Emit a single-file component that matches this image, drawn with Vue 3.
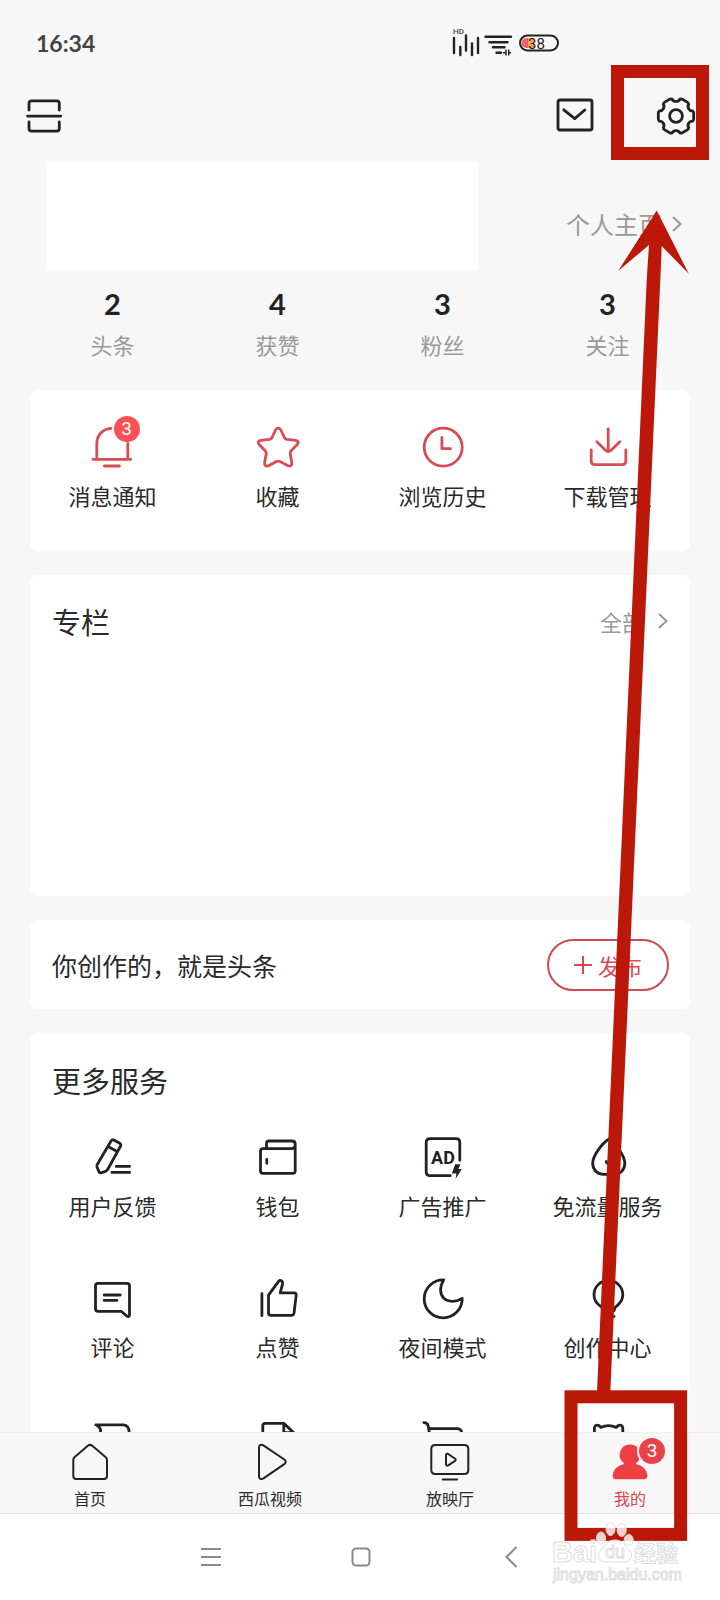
<script setup>
const stats = [
  { value: 2, label: '头条' },
  { value: 4, label: '获赞' },
  { value: 3, label: '粉丝' },
  { value: 3, label: '关注' },
]

const shortcuts = [
  {
    label: '消息通知',
    badge: 3,
    d: 'M22 5.4C13 6.2 7.8 12.4 7.8 21V36.3M38.8 20.3V36.3M4 36.3H41.8M15.4 43H30.4',
  },
  {
    label: '收藏',
    d: 'M21.5 7Q24.2 3.2 26.9 7L30.4 14.5Q31.2 16 33 16.3L41.7 17.3Q46 18.5 43 21.7L37 28Q35.9 29.3 36.2 31L37.8 39.5Q38 44.2 34 42.8L26 38.5Q24.2 37.7 22.4 38.5L14.5 42.8Q10.3 44.2 10.6 39.5L12.2 31Q12.5 29.3 11.4 28L5.4 21.7Q2.4 18.5 6.7 17.3L15.4 16.3Q17.2 16 18 14.5Z',
  },
  {
    label: '浏览历史',
    d: 'M5.2 24.2a19 19 0 1 0 38 0a19 19 0 1 0 -38 0M22.9 14.3V25.7H31.5',
  },
  {
    label: '下载管理',
    d: 'M24.2 6V28.5M12.8 18.7L21.5 27.3Q24.2 29.5 27 27.3L35.8 18.7M7.2 27V38Q7.2 41.7 11 41.7H38Q41.8 41.7 41.8 38V27',
  },
]

const services = [
  {
    label: '用户反馈',
    d: 'M22.2 7.8Q23.2 6.3 24.8 7L30.8 10.3Q32.4 11.4 31.6 13L18.8 36.2Q18 37.8 16.4 38.4L12 39.9Q10.6 40.2 10.1 38.9L8 34Q7.6 32.6 8.4 31.2ZM19.5 13.7L28.2 18.5M27.2 33.4H40.6M22.9 39.4H40.6',
  },
  {
    label: '钱包',
    d: 'M12.5 15.7V10.5Q12.5 8 15 8H38Q41.2 8 41.2 11V38Q41.2 40.3 38.8 40.3H9Q6.5 40.3 6.5 37.8V18.2Q6.5 15.7 9 15.7H37Q41.2 15.7 41.2 11.5M12.8 26.5V30.3',
  },
  {
    label: '广告推广',
    d: 'M40.8 27.3V9.7Q40.8 5.7 36.8 5.7H11.2Q7.2 5.7 7.2 9.7V38.7Q7.2 42.7 11.2 42.7H31.3',
    fill: 'M36.2 31.3H41.4L39.4 36H42.8L36.6 46L37.4 40.4H32.8Z',
    text: 'AD',
  },
  {
    label: '免流量服务',
    d: 'M24.7 6.2C17.8 10.5 8.7 23 8.7 30.2C8.7 37.2 13.5 41.3 20 41.3H30C36.5 41.3 40.8 36.8 40.8 30.2C40.8 23 31.7 10.5 24.7 6.2ZM22.2 28.5Q23 31.5 27.2 31.2',
  },
  {
    label: '评论',
    d: 'M9 9.3H38Q40.5 9.3 40.5 11.8V41Q40.2 43.2 38 42.2L32.2 37.3H9Q6.5 37.3 6.5 34.8V11.8Q6.5 9.3 9 9.3ZM15.2 21H31.2M15.2 26.4H28',
  },
  {
    label: '点赞',
    d: 'M7.9 19.7V41.7M14.7 20.8L24.6 7.3Q26.1 5.9 27.8 7.2Q29 8.2 28.6 9.8L26.2 18.8H40Q42.5 18.9 42.2 21.4L40 39Q39.5 41.4 37.2 41.4H17Q14.5 41.4 14.5 39V22Q14.4 21.3 14.7 20.8Z',
  },
  {
    label: '夜间模式',
    d: 'M24.6 5.8A19 19 0 1 0 43.2 24.4C37 28.5 29 28 24.8 24.3C20.5 19.5 20.5 13.5 24.6 5.8Z',
  },
  {
    label: '创作中心',
    d: 'M18.8 36.5Q19 33.5 16 31.8C12 29 10 25 10 20.8A14.4 14.4 0 0 1 38.8 20.8C38.8 25 36.5 29 33 31.8Q30.2 33.5 30.2 36.5ZM19 42.4H30',
  },
  { label: '', d: 'M6.8 9.8H34.5Q40 10.2 40.2 17.5V40H16Q11.5 40 11.5 35V14.5Q10 11 6.8 9.8Z' },
  { label: '', d: 'M8.8 40V10.8Q8.8 8.3 11.3 8.3H29.8L39.5 17.6V40ZM29.8 8.3V17.6H39.5' },
  { label: '', d: 'M4.8 7.6Q8.6 7.6 9.2 11L13 33H38L42.8 17.2Q42 13.6 38.2 13.6H9.6' },
  {
    label: '',
    d: 'M10.4 30V13Q10.8 9 15 10.6L17 12.4Q24.5 9 32.2 12.4L34.2 10.6Q38.4 9 38.8 13V30Z',
  },
]

const tabs = [
  {
    label: '首页',
    d: 'M21.8 7.8Q24 6 26.2 7.8L39.8 19.2Q41 20.3 41 22V38Q41 41 38 41H10.3Q7.3 41 7.3 38V22Q7.3 20.3 8.5 19.2Z',
  },
  {
    label: '西瓜视频',
    d: 'M13 9.5Q13.2 5.7 17 7.2L38.3 21.5Q41.2 23.8 38.3 26.2L17.5 40.4Q13.5 42.3 13 38.5Z',
  },
  {
    label: '放映厅',
    d: 'M9.3 7H38.3Q42.3 7 42.3 11V32Q42.3 36 38.3 36H9.3Q5.3 36 5.3 32V11Q5.3 7 9.3 7ZM16.8 41.4H31.2M20 17.5Q20 15 22.2 16L28.8 20.5Q30.6 21.8 28.8 23.2L22.2 27.4Q20 28.3 20 26Z',
  },
  {
    label: '我的',
    badge: 3,
    active: true,
    fill: 'M24 6.5A10.2 10.2 0 0 1 30.2 24.9V26.2C36.5 27.5 40.5 31.5 41.4 37Q41.8 41.2 37.5 41.2H10.5Q6.2 41.2 6.6 37C7.5 31.5 11.5 27.5 17.8 26.2V24.9A10.2 10.2 0 0 1 24 6.5Z',
  },
]

/* Six-toothed gear outline around the centre (20, 20). */
const polar = (r, deg) => {
  const a = (deg * Math.PI) / 180
  return `${(20 + r * Math.cos(a)).toFixed(2)} ${(20 + r * Math.sin(a)).toFixed(2)}`
}
const gear =
  Array.from({ length: 6 }, (_, k) => {
    const a = k * 60
    return (
      `${k ? 'L' : 'M'}${polar(17.4, a - 17)} Q${polar(18.2, a - 14)} ${polar(17.9, a - 9)}` +
      ` L${polar(17.9, a + 9)} Q${polar(18.2, a + 14)} ${polar(17.4, a + 17)}` +
      ` C${polar(14, a + 20)} ${polar(14, a + 40)} ${polar(17.4, a + 43)}`
    )
  }).join(' ') + 'Z'
</script>

<template>
  <div class="page">
    <div class="status">
      <time class="clock">16:34</time>
      <svg class="status-icons" viewBox="0 0 112 32" aria-hidden="true">
        <text x="3" y="8" class="hd">HD</text>
        <path class="bars" d="M4 12V27M10.3 21V29M16 9.5V24.5M22 17.5V29M28 12V27" />
        <path class="bars" d="M35.5 10.7H61M39.5 16.3H57.5M43 21.2H54.5M46.5 26.7H51" />
        <path class="bars fine" d="M53.5 26.7H56M56 24V29M58.7 24V29M58.7 26.7H60.5" />
        <rect x="70" y="9.5" width="38" height="15" rx="7.5" class="cell" />
        <path class="charge" d="M78.5 12H76.5a5 5 0 0 0 0 10H78.5Z" />
        <path class="charge-edge" d="M78.5 12H84V22H78.5Z" />
        <text x="78" y="22.5" class="percent">38</text>
      </svg>
    </div>

    <header class="header">
      <button class="icon-button" aria-label="扫一扫">
        <svg viewBox="0 0 40 40" class="line-icon">
          <path d="M5 14V7.5Q5 4.8 7.7 4.8H32.6Q35.3 4.8 35.3 7.5V14M3.6 20.1H36.8M5 26V32.5Q5 35.2 7.7 35.2H32.6Q35.3 35.2 35.3 32.5V26" />
        </svg>
      </button>
      <div class="header-actions">
        <button class="icon-button" aria-label="私信">
          <svg viewBox="0 0 40 40" class="line-icon">
            <rect x="3" y="4" width="34" height="30" rx="2" />
            <path d="M8.8 13.8L19.7 22.6L29.8 14" />
          </svg>
        </button>
        <button class="icon-button" aria-label="设置">
          <svg viewBox="0 0 40 40" class="line-icon">
            <path :d="gear" />
            <circle cx="20" cy="20" r="6.4" />
          </svg>
        </button>
      </div>
    </header>

    <main class="content">
      <section class="profile">
        <div class="identity"></div>
        <a class="more profile-link" href="#profile">
          个人主页
          <svg class="chevron" viewBox="0 0 10 16"><path d="M1 1L8.5 8L1 15" /></svg>
        </a>
      </section>

      <section class="columns stats">
        <div v-for="s in stats" :key="s.label" class="stat">
          <strong>{{ s.value }}</strong>
          <span>{{ s.label }}</span>
        </div>
      </section>

      <section class="card columns shortcuts">
        <button v-for="item in shortcuts" :key="item.label" class="tile">
          <span class="glyph">
            <svg viewBox="0 0 48 48" class="line-icon red"><path :d="item.d" /></svg>
            <span v-if="item.badge" class="badge">{{ item.badge }}</span>
          </span>
          <span class="tile-label">{{ item.label }}</span>
        </button>
      </section>

      <section class="card feature">
        <h2>专栏</h2>
        <a class="more" href="#columns">
          全部
          <svg class="chevron" viewBox="0 0 10 16"><path d="M1 1L8.5 8L1 15" /></svg>
        </a>
      </section>

      <section class="card create">
        <p>你创作的，就是头条</p>
        <button class="publish">
          <svg viewBox="0 0 18 18"><path d="M9 0V18M0 9H18" /></svg>
          发布
        </button>
      </section>

      <section class="card services">
        <h2>更多服务</h2>
        <div class="columns service-grid">
          <button v-for="(item, i) in services" :key="i" class="tile">
            <span class="glyph">
              <svg viewBox="0 0 48 48" class="line-icon">
                <path :d="item.d" />
                <path v-if="item.fill" :d="item.fill" class="solid" />
                <text v-if="item.text" x="24" y="31" class="glyph-text">{{ item.text }}</text>
              </svg>
            </span>
            <span v-if="item.label" class="tile-label">{{ item.label }}</span>
          </button>
        </div>
      </section>
    </main>

    <nav class="tabs">
      <a v-for="t in tabs" :key="t.label" href="#tab" class="tab" :class="{ active: t.active }">
        <span class="glyph">
          <svg viewBox="0 0 48 48" class="line-icon thin">
            <path v-if="t.d" :d="t.d" />
            <path v-if="t.fill" :d="t.fill" class="solid" />
          </svg>
          <span v-if="t.badge" class="badge tab-badge">{{ t.badge }}</span>
        </span>
        <span>{{ t.label }}</span>
      </a>
    </nav>

    <div class="system">
      <button aria-label="菜单">
        <svg viewBox="0 0 32 32"><path d="M6 8H26M6 16H26M6 24H26" /></svg>
      </button>
      <button aria-label="主屏幕">
        <svg viewBox="0 0 32 32"><rect x="7.5" y="7.5" width="17" height="17" rx="3.5" /></svg>
      </button>
      <button aria-label="返回">
        <svg viewBox="0 0 32 32"><path d="M21.5 6L11.5 16L21.5 26" /></svg>
      </button>
    </div>

    <svg class="guide" viewBox="0 0 160 1600" aria-hidden="true">
      <rect x="57.5" y="71.5" width="85" height="82" />
      <rect x="11" y="1396.8" width="109.6" height="137.6" />
      <path d="M96.7 210.5L128.8 273.8L101.7 246L100.3 280L50.3 1392H37L86.7 280L89 245L58.3 270.8Z" />
    </svg>

    <svg class="watermark" viewBox="0 0 132 68" aria-hidden="true">
      <text x="0" y="43" class="brand">Bai</text>
      <ellipse cx="49" cy="19" rx="4.5" ry="6" />
      <ellipse cx="58.5" cy="10" rx="4.5" ry="6.5" />
      <ellipse cx="69.7" cy="11" rx="4.5" ry="6.5" />
      <ellipse cx="76.7" cy="21" rx="4.5" ry="5.5" />
      <path d="M63 21C55 21 53 27 49 31C44 36 47 43 54 43H72C79 43 82 36 77 31C73 27 71 21 63 21Z" />
      <text x="53" y="39" class="du">du</text>
      <text x="82" y="42" class="brand-cn">经验</text>
      <text x="1" y="61" class="url">jingyan.baidu.com</text>
    </svg>
  </div>
</template>

<style>
body {
  background: #f7f7f7;
}
</style>

<style scoped>
.page {
  position: relative;
  display: flex;
  flex-direction: column;
  height: 100vh;
  overflow: hidden;
  background: #f7f7f7;
  color: #2a2a2a;
  font-family: "Noto Sans CJK SC", sans-serif;
  font-size: 22px;
  line-height: 32px;
}

button {
  padding: 0;
  border: 0;
  background: none;
  color: inherit;
  font: inherit;
}

a {
  color: inherit;
  text-decoration: none;
}

svg {
  display: block;
  flex: none;
}

h2,
p {
  margin: 0;
}

h2 {
  font-size: 29px;
  font-weight: 400;
  line-height: 40px;
}

.status {
  flex: none;
  display: flex;
  align-items: center;
  justify-content: space-between;
  height: 84px;
  padding: 0 158px 0 36px;
  box-sizing: border-box;
}

.clock {
  padding-top: 2px;
  color: #444;
  font-family: Lato, sans-serif;
  font-size: 23px;
  font-weight: 700;
}

.status-icons {
  width: 112px;
  height: 32px;
}

.hd {
  fill: #444;
  font-family: Roboto, sans-serif;
  font-size: 8px;
  font-weight: 500;
}

.bars {
  fill: none;
  stroke: #222;
  stroke-width: 2.4;
  stroke-linecap: round;
}

.bars.fine {
  stroke-width: 1.4;
}

.cell {
  fill: #fdf6f6;
  stroke: #222;
  stroke-width: 2;
}

.charge {
  fill: #f2606c;
}

.charge-edge {
  fill: #f9a63c;
}

.percent {
  fill: #222;
  font-family: Roboto, sans-serif;
  font-size: 15px;
}

.header {
  flex: none;
  display: flex;
  align-items: center;
  justify-content: space-between;
  height: 64px;
  padding: 0 24px;
}

.header-actions {
  display: flex;
  gap: 61px;
}

.icon-button,
.icon-button svg {
  display: block;
  width: 40px;
  height: 40px;
}

.line-icon {
  fill: none;
  stroke: #222;
  stroke-width: 2.8;
  stroke-linecap: round;
  stroke-linejoin: round;
}

.line-icon.thin {
  stroke-width: 2;
}

.line-icon.red {
  stroke: #d94b55;
}

.line-icon .solid {
  fill: #222;
  stroke: none;
}

.content {
  flex: 1;
  min-height: 0;
  overflow: hidden;
  padding: 13px 30px 0;
}

.profile {
  display: flex;
  align-items: center;
  justify-content: space-between;
  margin: 0 8px 0 16px;
}

.identity {
  width: 68%;
  max-width: 432px;
  height: 110px;
  background: #fff;
}

.more {
  display: flex;
  align-items: center;
  gap: 14px;
  color: #999;
}

.profile-link {
  gap: 10px;
  padding-top: 16px;
  font-size: 24px;
}

.chevron {
  width: 10px;
  height: 16px;
  fill: none;
  stroke: #999;
  stroke-width: 2;
}

.columns {
  display: grid;
  grid-template-columns: repeat(4, 1fr);
}

.stats {
  margin: 17px 0 30px;
}

.stat {
  display: flex;
  flex-direction: column;
  align-items: center;
  gap: 8px;
  color: #999;
}

.stat strong {
  color: #222;
  font-family: Lato, sans-serif;
  font-size: 29px;
  font-weight: 700;
}

.card {
  margin-bottom: 24px;
  border-radius: 8px;
  background: #fff;
}

.shortcuts {
  padding: 33px 0 40px;
}

.tile {
  display: flex;
  flex-direction: column;
  align-items: center;
  gap: 8px;
}

.tile-label {
  white-space: nowrap;
}

.glyph {
  position: relative;
  width: 48px;
  height: 48px;
}

.glyph svg {
  width: 48px;
  height: 48px;
}

.glyph-text {
  fill: #222;
  stroke: none;
  font-family: Roboto, sans-serif;
  font-size: 18px;
  font-weight: 700;
  text-anchor: middle;
}

.badge {
  position: absolute;
  top: -7px;
  right: -3px;
  width: 26px;
  height: 26px;
  border-radius: 50%;
  background: #fa5055;
  color: #fff;
  font-family: Roboto, sans-serif;
  font-size: 19px;
  line-height: 26px;
  text-align: center;
}

.feature {
  display: flex;
  align-items: flex-start;
  justify-content: space-between;
  min-height: 321px;
  padding: 26px 22px 0;
  box-sizing: border-box;
}

.feature .more {
  line-height: 40px;
}

.create {
  display: flex;
  align-items: center;
  justify-content: space-between;
  min-height: 89px;
  padding: 0 21px 0 22px;
  font-size: 25px;
}

.publish {
  display: flex;
  align-items: center;
  justify-content: center;
  gap: 6px;
  width: 122px;
  height: 52px;
  border: 2px solid #cf4a53;
  border-radius: 26px;
  color: #d94b55;
  font-size: 22px;
}

.publish svg {
  width: 18px;
  height: 18px;
  fill: none;
  stroke: #e0454f;
  stroke-width: 2;
}

.services {
  padding-top: 27px;
}

.services h2 {
  padding: 0 22px;
}

.service-grid {
  row-gap: 53px;
  padding: 33px 0 40px;
}

.tabs {
  flex: none;
  display: grid;
  grid-template-columns: repeat(4, 1fr);
  padding: 5px 0 3px;
  border-top: 1px solid #f0f0f0;
  border-bottom: 1px solid #e2e2e2;
  background: #f7f7f7;
}

.tab {
  display: flex;
  flex-direction: column;
  align-items: center;
  font-size: 16px;
  line-height: 24px;
}

.tab.active {
  color: #d9444e;
}

.tab.active .solid {
  fill: #f03e46;
}

.tab-badge {
  top: 0;
  right: -11px;
  background: #ea4249;
  box-shadow: 0 0 0 2px #f7f7f7;
}

.system {
  flex: none;
  display: flex;
  align-items: center;
  justify-content: center;
  gap: 118px;
  height: 86px;
  padding-left: 2px;
  background: #fff;
}

.system svg {
  width: 32px;
  height: 32px;
  fill: none;
  stroke: #8a8a8a;
  stroke-width: 2;
}

.guide {
  position: absolute;
  top: 0;
  right: 0;
  width: 160px;
  height: 1600px;
  pointer-events: none;
}

.guide rect {
  fill: none;
  stroke: #bb180a;
  stroke-width: 13;
}

.guide path {
  fill: #bb180a;
}

.watermark {
  position: absolute;
  right: 36px;
  bottom: 13px;
  width: 132px;
  height: 68px;
  fill: rgba(255, 255, 255, 0.8);
  stroke: #dedede;
  stroke-width: 1;
  pointer-events: none;
}

.brand {
  font-family: "Liberation Sans", sans-serif;
  font-size: 29px;
  font-weight: 700;
}

.du {
  font-family: "Liberation Sans", sans-serif;
  font-size: 18px;
}

.brand-cn {
  font-family: "Noto Sans CJK SC", sans-serif;
  font-size: 22px;
  font-weight: 700;
}

.url {
  font-family: "Liberation Sans", sans-serif;
  font-size: 16px;
}
</style>
